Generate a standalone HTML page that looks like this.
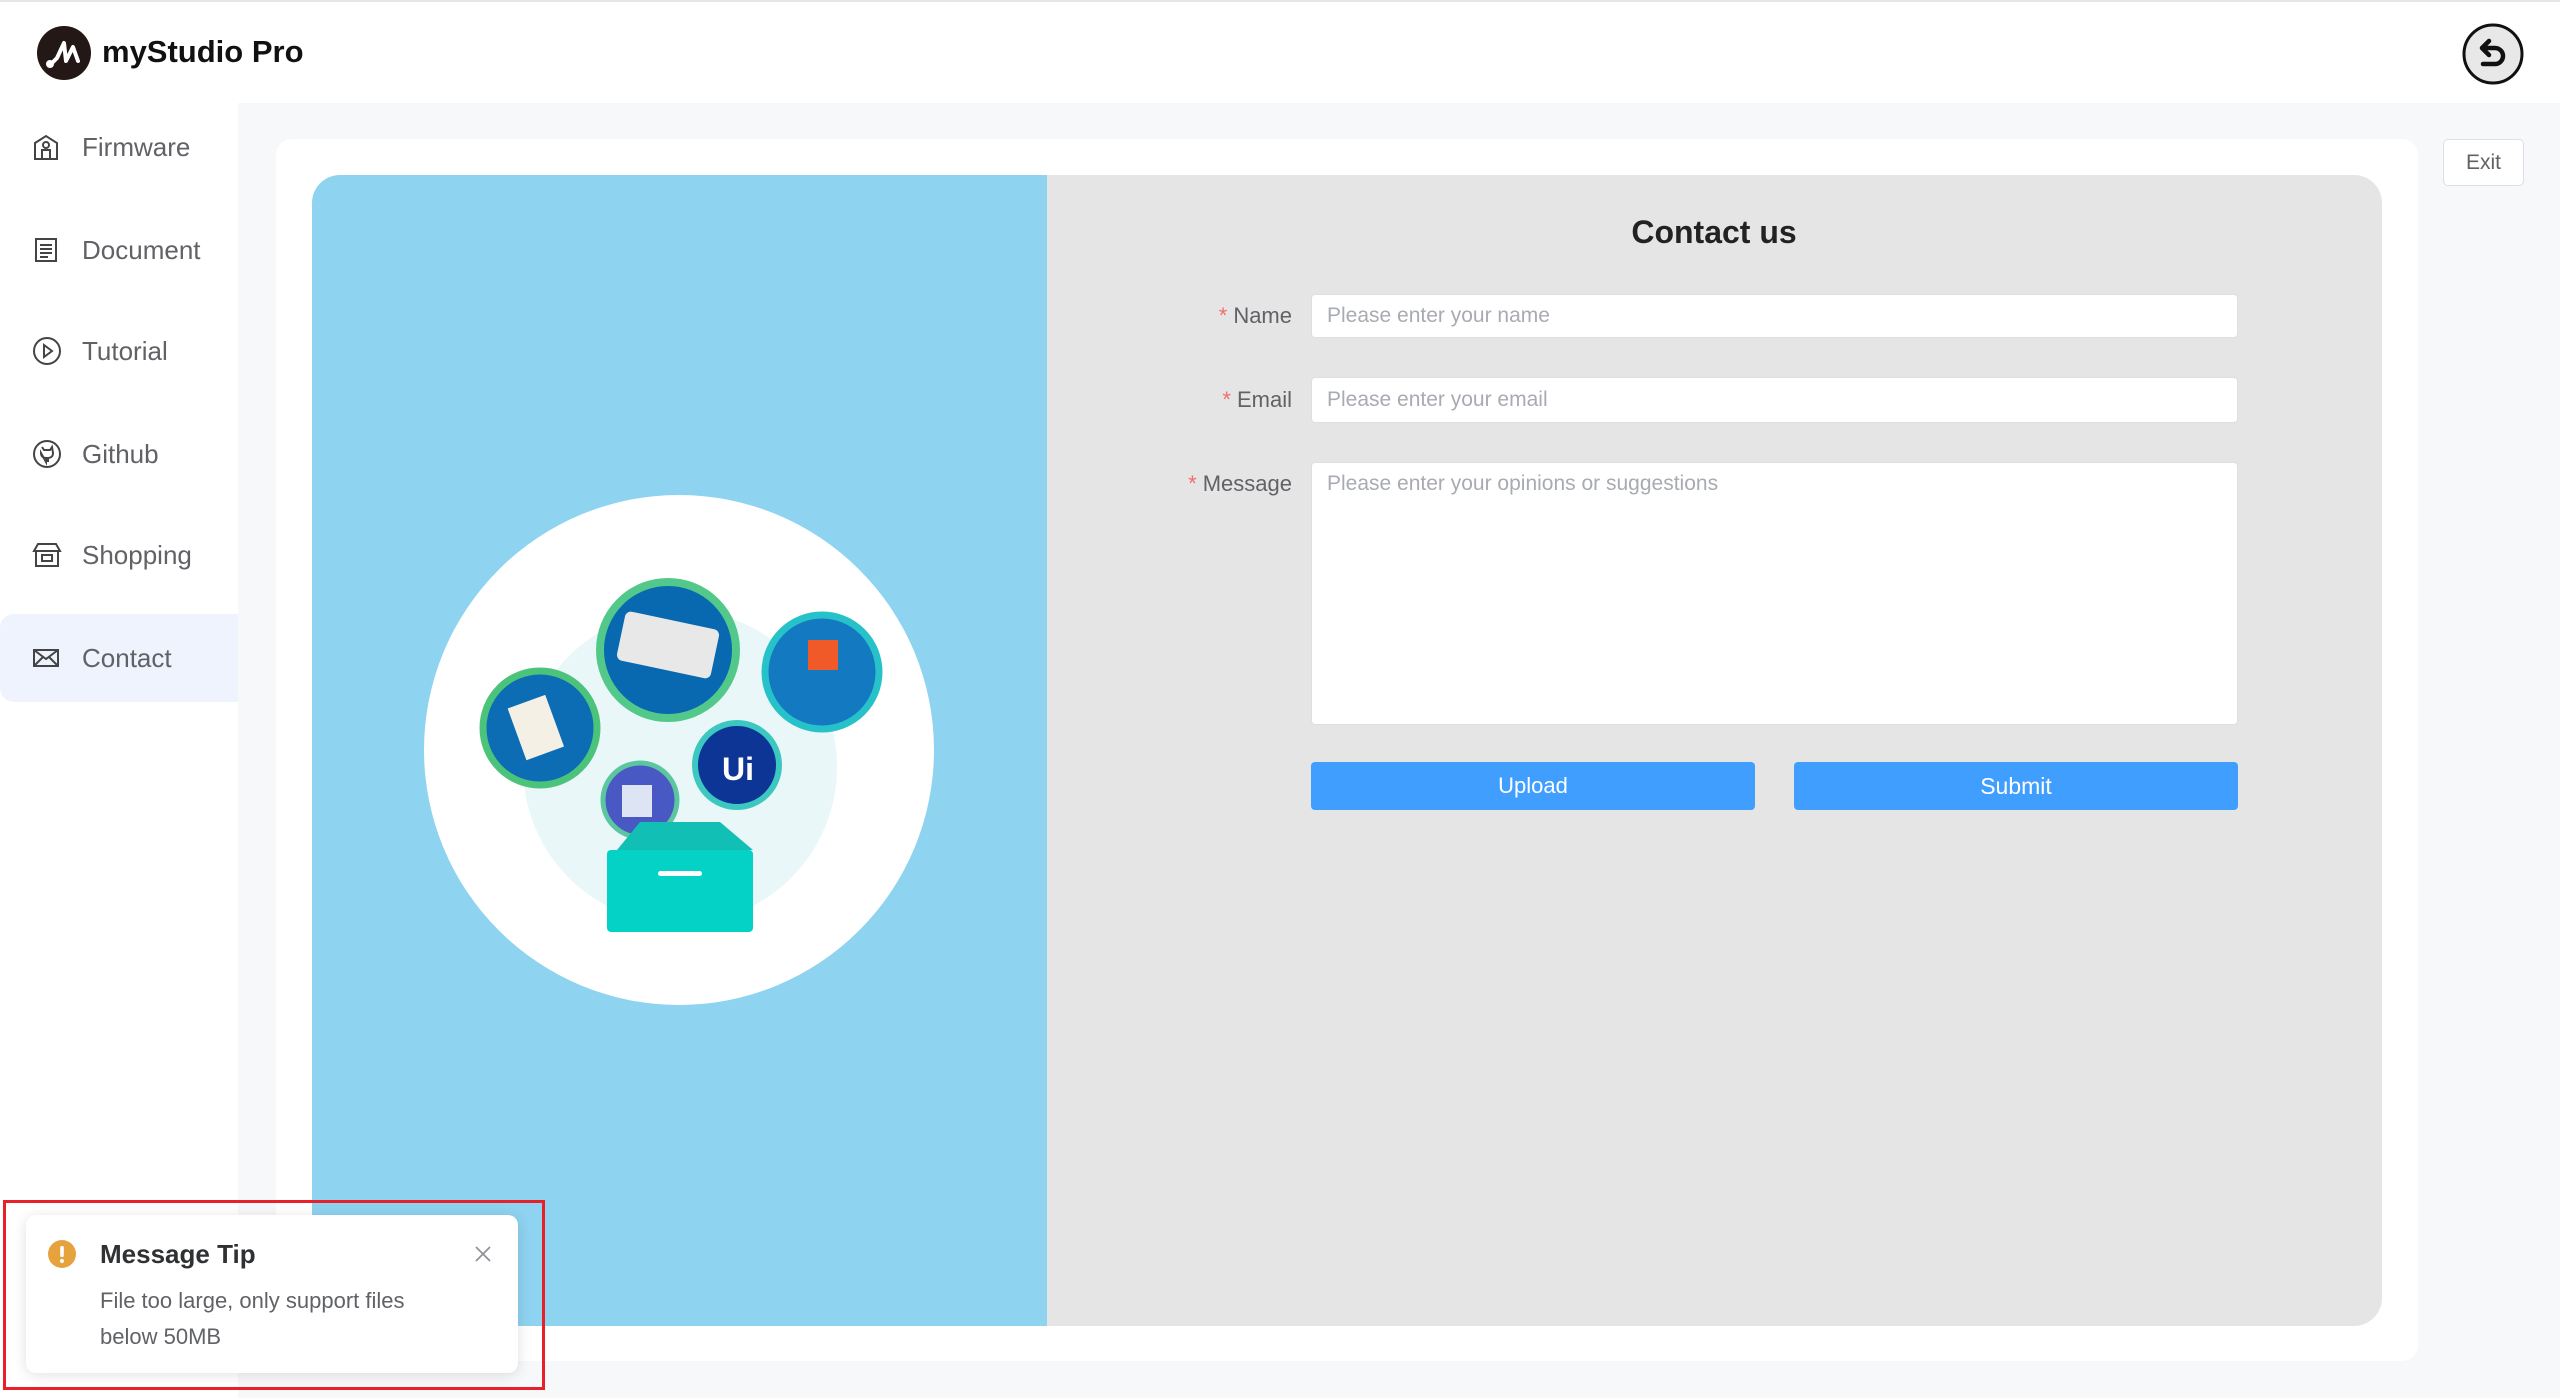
<!DOCTYPE html>
<html><head><meta charset="utf-8"><style>
*{box-sizing:border-box;margin:0;padding:0}
body{width:2560px;height:1398px;overflow:hidden;background:#f7f8fa;font-family:"Liberation Sans",sans-serif;position:relative}
.header{position:absolute;left:0;top:0;width:2560px;height:103px;background:#fff;border-top:2px solid #e6e6e6}
.brand{position:absolute;left:102px;top:32px;font-size:31px;font-weight:bold;color:#111}
.side{position:absolute;left:0;top:103px;width:238px;height:1295px;background:#fff}
.item{position:absolute;left:0;width:238px;height:88px;display:flex;align-items:center}
.item svg{position:absolute;left:32px}
.item span{position:absolute;left:82px;font-size:26px;color:#606266}
.item.active{background:#eef3fd;border-radius:14px 0 0 14px}
.card{position:absolute;left:276px;top:139px;width:2142px;height:1222px;background:#fff;border-radius:16px}
.blue{position:absolute;left:312px;top:175px;width:735px;height:1151px;background:#8ed3f0;border-radius:28px 0 0 28px}
.gray{position:absolute;left:1047px;top:175px;width:1335px;height:1151px;background:#e5e5e5;border-radius:0 28px 28px 0}
.title{position:absolute;left:1514px;width:400px;top:214px;text-align:center;font-size:32px;font-weight:bold;color:#222}
.lbl{position:absolute;width:200px;left:1092px;text-align:right;font-size:22px;color:#606266}
.lbl b{color:#f56c6c;font-weight:normal;margin-right:6px}
.inp{position:absolute;left:1311px;width:927px;background:#fff;border:1px solid #dcdfe6;border-radius:4px;font-size:21px;color:#a8abb2;padding-left:15px}
.btn{position:absolute;top:762px;height:48px;width:444px;background:#409eff;border-radius:4px;color:#fff;font-size:22px;text-align:center;line-height:48px}
.exit{position:absolute;left:2443px;top:139px;width:81px;height:47px;background:#fff;border:1px solid #dcdfe6;border-radius:5px;font-size:21px;color:#606266;text-align:center;line-height:45px}
.note{position:absolute;left:26px;top:1215px;width:492px;height:158px;background:#fff;border-radius:10px;box-shadow:0 2px 14px rgba(0,0,0,.12)}
.red{position:absolute;left:3px;top:1200px;width:542px;height:190px;border:3px solid #e8202a}
</style></head><body>
<div class="header">
<svg style="position:absolute;left:36px;top:23px" width="56" height="56" viewBox="0 0 56 56"><circle cx="28" cy="28" r="27" fill="#231815"/><path d="M14 40 L21 33 L28 18 L30 36 L37 22 L42 36" stroke="#fff" stroke-width="4" fill="none" stroke-linejoin="round" stroke-linecap="round"/><circle cx="14" cy="39" r="4" fill="#fff"/></svg>
<div class="brand">myStudio Pro</div>
<svg style="position:absolute;left:2461px;top:20px" width="64" height="64" viewBox="0 0 64 64"><circle cx="32" cy="32" r="29" fill="#e8e8e8" stroke="#111" stroke-width="3"/><path d="M24 26 H34 a8 8 0 0 1 0 16 H22" stroke="#111" stroke-width="4.5" fill="none" stroke-linecap="round"/><path d="M28 19 L21 26 L28 33" stroke="#111" stroke-width="4.5" fill="none" stroke-linecap="round" stroke-linejoin="round"/></svg>
</div>
<div class="side">
<div class="item" style="top:0"><svg width="28" height="28" viewBox="0 0 28 28" fill="none" stroke="#444" stroke-width="2"><path d="M3 10 L14 3 L25 10 V26 H3 Z"/><circle cx="14" cy="12" r="3"/><path d="M10 26 V17 H18 V26"/></svg><span>Firmware</span></div>
<div class="item" style="top:103px"><svg width="28" height="28" viewBox="0 0 28 28" fill="none" stroke="#444" stroke-width="2"><rect x="4" y="3" width="20" height="22"/><path d="M8 9h12M8 13h12M8 17h12M8 21h8"/></svg><span>Document</span></div>
<div class="item" style="top:204px"><svg width="30" height="30" viewBox="0 0 30 30" fill="none" stroke="#444" stroke-width="2"><circle cx="15" cy="15" r="13"/><path d="M12 9 L20 15 L12 21 Z"/></svg><span>Tutorial</span></div>
<div class="item" style="top:307px"><svg width="30" height="30" viewBox="0 0 30 30" fill="none" stroke="#444" stroke-width="2"><circle cx="15" cy="15" r="13"/><path d="M10 8 L12 11 H18 L20 8 L21 14 C21 18 18 19 16 19 V23 M14 23 V19 C12 19 9 18 9 14 Z"/></svg><span>Github</span></div>
<div class="item" style="top:408px"><svg width="30" height="30" viewBox="0 0 30 30" fill="none" stroke="#444" stroke-width="2"><path d="M6 4 H24 L28 11 H2 Z M4 11 V26 H26 V11"/><rect x="10" y="15" width="10" height="6"/></svg><span>Shopping</span></div>
<div class="item active" style="top:511px"><svg width="28" height="28" viewBox="0 0 28 28" fill="none" stroke="#444" stroke-width="2"><rect x="2" y="6" width="24" height="16"/><path d="M2 6 L14 15 L26 6 M2 22 L11 13 M26 22 L17 13"/></svg><span>Contact</span></div>
</div>
<div class="card"></div>
<div class="blue"></div>
<div class="gray"></div>
<svg style="position:absolute;left:312px;top:175px" width="735" height="1151" viewBox="312 175 735 1151">
<circle cx="679" cy="750" r="255" fill="#fff"/>
<circle cx="680" cy="767" r="157" fill="#e9f7f8"/>
<circle cx="668" cy="650" r="68" fill="#0868b0" stroke="#52c98a" stroke-width="8"/>
<rect x="620" y="620" width="96" height="50" rx="6" fill="#e8e8e8" transform="rotate(12 668 645)"/>
<circle cx="822" cy="672" r="57" fill="#1379c0" stroke="#27c2c9" stroke-width="7"/>
<rect x="808" y="640" width="30" height="30" fill="#f05a28"/>
<circle cx="540" cy="728" r="57" fill="#0c6db5" stroke="#4cc37a" stroke-width="7"/>
<rect x="516" y="700" width="40" height="55" fill="#f5f0e6" transform="rotate(-20 536 728)"/>
<circle cx="737" cy="765" r="42" fill="#0c3596" stroke="#3cc7c0" stroke-width="6"/>
<text x="722" y="780" font-family="Liberation Sans" font-weight="bold" font-size="32" fill="#fff">Ui</text>
<circle cx="640" cy="800" r="37" fill="#4a58c4" stroke="#5ac7a0" stroke-width="5"/>
<rect x="622" y="785" width="30" height="32" fill="#dde4f3"/>
<path d="M617 850 L640 822 L720 822 L753 850 Z" fill="#12bfb4"/>
<rect x="607" y="850" width="146" height="82" rx="4" fill="#05d2c6"/>
<rect x="658" y="871" width="44" height="5" rx="2.5" fill="#fff"/>
</svg>
<div class="exit">Exit</div>
<div class="title">Contact us</div>
<div class="lbl" style="top:303px"><b>*</b>Name</div>
<div class="lbl" style="top:387px"><b>*</b>Email</div>
<div class="lbl" style="top:471px"><b>*</b>Message</div>
<div class="inp" style="top:294px;height:44px;line-height:42px">Please enter your name</div>
<div class="inp" style="top:377px;height:46px;line-height:44px">Please enter your email</div>
<div class="inp" style="top:462px;height:263px;padding-top:9px">Please enter your opinions or suggestions</div>
<div class="btn" style="left:1311px">Upload</div>
<div class="btn" style="left:1794px;font-size:23px">Submit</div>
<div class="note">
<svg style="position:absolute;left:21px;top:24px" width="30" height="30" viewBox="0 0 30 30"><circle cx="15" cy="15" r="14" fill="#e6a23c"/><rect x="13.2" y="7" width="3.6" height="11" rx="1.5" fill="#fff"/><circle cx="15" cy="22" r="2" fill="#fff"/></svg>
<div style="position:absolute;left:74px;top:24px;font-size:26px;font-weight:bold;color:#303133">Message Tip</div>
<div style="position:absolute;left:74px;top:68px;font-size:22px;line-height:36px;color:#606266;width:360px">File too large, only support files below 50MB</div>
<svg style="position:absolute;left:449px;top:31px" width="16" height="16" viewBox="0 0 16 16"><path d="M1 1L15 15M15 1L1 15" stroke="#909399" stroke-width="1.8"/></svg>
</div>
<div class="red"></div>
</body></html>
